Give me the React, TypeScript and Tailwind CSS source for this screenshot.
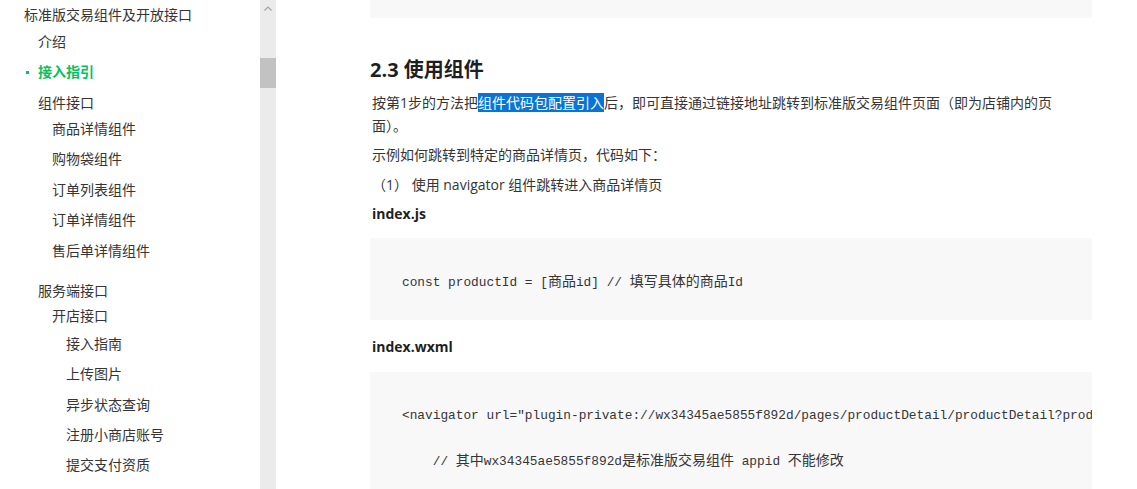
import React from "react";

const items: { text: string; cls: string; active?: boolean }[] = [
  { text: "标准版交易组件及开放接口", cls: "pl-[24px] mt-[5px]" },
  { text: "介绍", cls: "pl-[38px] mt-[7px]" },
  { text: "接入指引", cls: "pl-[38px] mt-[10px]", active: true },
  { text: "组件接口", cls: "pl-[38px] mt-[11px]" },
  { text: "商品详情组件", cls: "pl-[52px] mt-[6px]" },
  { text: "购物袋组件", cls: "pl-[52px] mt-[10px]" },
  { text: "订单列表组件", cls: "pl-[52px] mt-[11px]" },
  { text: "订单详情组件", cls: "pl-[52px] mt-[10px]" },
  { text: "售后单详情组件", cls: "pl-[52px] mt-[11px]" },
  { text: "服务端接口", cls: "pl-[38px] mt-[20px]" },
  { text: "开店接口", cls: "pl-[52px] mt-[5px]" },
  { text: "接入指南", cls: "pl-[66px] mt-[8px]" },
  { text: "上传图片", cls: "pl-[66px] mt-[10px]" },
  { text: "异步状态查询", cls: "pl-[66px] mt-[11px]" },
  { text: "注册小商店账号", cls: "pl-[66px] mt-[10px]" },
  { text: "提交支付资质", cls: "pl-[66px] mt-[10px]" },
];

const sans = 'font-["Open_Sans","Noto_Sans_CJK_SC",sans-serif]';
const mono = 'font-["Liberation_Mono","Noto_Sans_CJK_SC",monospace]';
const cjk = 'text-[14px] font-["Noto_Sans_CJK_SC",sans-serif]';

export default function App() {
  return (
    <div
      className="flex h-[489px] w-[1137px] overflow-hidden bg-white text-[#353535]"
      style={{ fontFamily: '"Open Sans","Noto Sans CJK SC",sans-serif' }}
    >
      {/* Sidebar */}
      <div className="w-[260px] shrink-0 overflow-hidden bg-white">
        {items.map((it) => (
          <div
            key={it.text}
            className={`relative h-[20px] text-[14px] leading-[20px] whitespace-nowrap ${it.cls} ${
              it.active ? "font-bold text-[#07c160]" : ""
            }`}
          >
            {it.active && (
              <span className="absolute left-[26px] top-[9px] h-[3px] w-[3px] bg-[#07c160]" />
            )}
            {it.text}
          </div>
        ))}
      </div>

      {/* Scrollbar */}
      <div className="flex w-[16px] shrink-0 flex-col items-center bg-[#ebebeb]">
        <svg width="16" height="16" viewBox="0 0 16 16" className="mt-[1px]">
          <path d="M4.5 9.5 L8 6 L11.5 9.5" fill="none" stroke="#a3a3a3" strokeWidth="1.2" />
        </svg>
        <div className="mt-[41px] h-[30px] w-[16px] bg-[#c2c2c2]" />
      </div>

      {/* Main */}
      <div className={`flex min-w-0 flex-1 flex-col pl-[94px] pr-[45px] ${sans}`}>
        <div className="h-[18px] w-full bg-[#f8f8f9]" />

        <h2 className="mt-[38px] text-[20px] font-bold leading-[28px] text-[#1f1f1f]">2.3 使用组件</h2>

        <p className="mt-[7px] pl-[2px] text-[14px] leading-[23px]">
          按第1步的方法把<span className="bg-[#0a74d6] text-white">组件代码包配置引入</span>
          后，即可直接通过链接地址跳转到标准版交易组件页面（即为店铺内的页
          <br />
          面）。
        </p>

        <p className="mt-[6px] pl-[2px] text-[14px] leading-[23px]">示例如何跳转到特定的商品详情页，代码如下：</p>

        <p className="mt-[7px] pl-[2px] text-[14px] leading-[23px]">（1） 使用 navigator 组件跳转进入商品详情页</p>

        <p className="mt-[6px] pl-[2px] text-[14px] font-bold leading-[23px] text-[#1f1f1f]">index.js</p>

        <div className="mt-[13px] w-full overflow-hidden bg-[#f8f8f9] pt-[33px] pb-[31px] px-[32px]">
          <div className={`h-[18px] text-[12.8px] leading-[18px] whitespace-pre ${mono}`}>
            {"const productId = ["}
            <span className={cjk}>商品</span>
            {"id] // "}
            <span className={cjk}>填写具体的商品</span>
            {"Id"}
          </div>
        </div>

        <p className="mt-[15px] pl-[2px] text-[14px] font-bold leading-[23px] text-[#1f1f1f]">index.wxml</p>

        <div className="mt-[14px] w-full flex-1 overflow-hidden bg-[#f8f8f9] pt-[34px] pl-[32px]">
          <div className={`flex flex-col gap-[23px] text-[12.8px] leading-[20px] whitespace-pre ${mono}`}>
            <div>{'<navigator url="plugin-private://wx34345ae5855f892d/pages/productDetail/productDetail?productId={{productId}}">'}</div>
            <div>
              {"    // "}
              <span className={cjk}>其中</span>
              {"wx34345ae5855f892d"}
              <span className={cjk}>是标准版交易组件</span>
              {" appid "}
              <span className={cjk}>不能修改</span>
            </div>
          </div>
        </div>
      </div>
    </div>
  );
}
